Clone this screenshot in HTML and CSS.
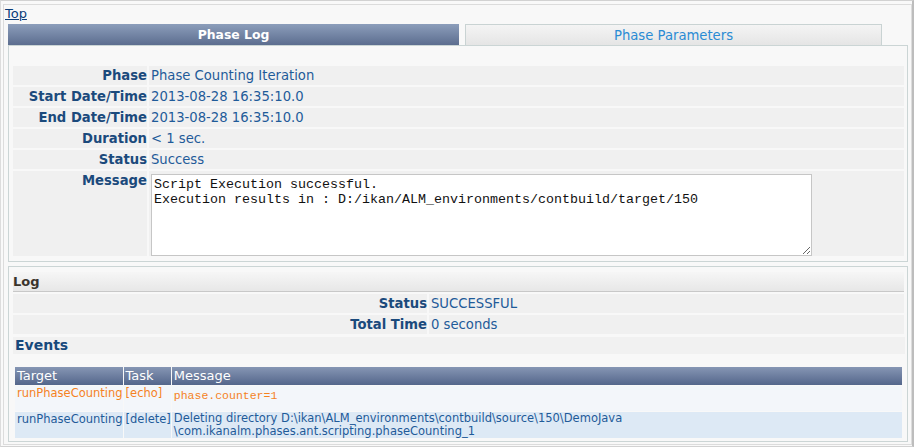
FILE: index.html
```html
<!DOCTYPE html>
<html>
<head>
<meta charset="utf-8">
<title>Phase Log</title>
<link rel="stylesheet" href="styles.css">
</head>
<body>
<div class="frame">
  <div class="box">
    <a class="top-link" href="#">Top</a>
    <div class="tabs">
      <div class="tab tab-active">Phase Log</div>
      <div class="tab tab-idle">Phase Parameters</div>
    </div>
    <div class="panel">
      <table class="kv details">
        <tr><td class="label">Phase</td><td class="value">Phase Counting Iteration</td></tr>
        <tr><td class="label">Start Date/Time</td><td class="value">2013-08-28 16:35:10.0</td></tr>
        <tr><td class="label">End Date/Time</td><td class="value">2013-08-28 16:35:10.0</td></tr>
        <tr><td class="label">Duration</td><td class="value">&lt; 1 sec.</td></tr>
        <tr><td class="label">Status</td><td class="value">Success</td></tr>
        <tr class="msg-row"><td class="label">Message</td><td class="value msg-cell"><textarea class="msg" readonly>Script Execution successful.
Execution results in : D:/ikan/ALM_environments/contbuild/target/150</textarea></td></tr>
      </table>
    </div>
    <div class="panel log-panel">
      <table class="kv log-kv">
        <tr><th class="log-head" colspan="2">Log</th></tr>
        <tr><td class="label log-label">Status</td><td class="value">SUCCESSFUL</td></tr>
        <tr><td class="label log-label">Total Time</td><td class="value">0 seconds</td></tr>
      </table>
      <div class="events-title">Events</div>
      <table class="events">
        <tr class="ev-head"><th>Target</th><th>Task</th><th class="ev-msg">Message</th></tr>
        <tr class="ev-row ev-warn"><td class="nw">runPhaseCounting</td><td class="nw">[echo]</td><td class="ev-msg"><span class="mono">phase.counter=1</span></td></tr>
        <tr class="ev-row ev-info"><td class="nw">runPhaseCounting</td><td class="nw">[delete]</td><td class="ev-msg tight">Deleting directory D:\ikan\ALM_environments\contbuild\source\150\DemoJava<br>\com.ikanalm.phases.ant.scripting.phaseCounting_1</td></tr>
      </table>
    </div>
  </div>
</div>
</body>
</html>
```
FILE: styles.css
```css
html, body {
  margin: 0;
  padding: 0;
  background: #f9f9f9;
}
body {
  font-family: "DejaVu Sans", Verdana, sans-serif;
  font-size: 13px;
}
.frame {
  box-sizing: border-box;
  width: 914px;
  height: 447px;
  border-top: 1px solid #d2d2d2;
  border-left: 1px solid #dcdcdc;
  border-right: 2px solid #bdbdbd;
  border-bottom: 1px solid #d2d2d2;
  padding: 3px 0 0 2px;
}
.box {
  box-sizing: border-box;
  height: 441px;
  border: 1px solid #dcdcdc;
  background: #f8f8f8;
  padding: 0 3px 0 4px;
}
.top-link {
  display: block;
  width: max-content;
  margin-left: -3px;
  color: #0b3d78;
  text-decoration: underline;
  font-size: 13px;
  line-height: 15px;
  height: 15px;
  margin-top: 1px;
  margin-bottom: 3px;
}
.tabs {
  display: flex;
  gap: 6px;
  height: 21px;
}
.tab {
  box-sizing: border-box;
  height: 21px;
  line-height: 21px;
  text-align: center;
}
.tab-active {
  width: 451px;
  background: linear-gradient(#8c9ebb, #5c6d8f);
  color: #ffffff;
  font-weight: bold;
  font-size: 12.4px;
}
.tab-idle {
  width: 417px;
  border: 1px solid #c9d3d3;
  border-bottom: none;
  background: linear-gradient(#f4f4f4, #e5e5e5);
  color: #2a8bd4;
  font-size: 13.2px;
  line-height: 21px;
}
.panel {
  box-sizing: border-box;
  width: 900px;
  height: 217px;
  border: 1px solid #cbd5d5;
  background: #f8f8f8;
}
.kv {
  border-collapse: separate;
  border-spacing: 2px;
  width: calc(100% - 3px);
  margin: 18px 1px 0 2px;
  font-size: 13.2px;
}
.kv td {
  background: #f0f0f0;
  height: 19px;
  padding: 0;
  line-height: 15px;
}
.label {
  width: 134px;
  text-align: right;
  font-weight: bold;
  color: #1b4a7c;
  white-space: nowrap;
}
.value {
  color: #1f5b99;
  padding-left: 2px !important;
}
.msg-row td {
  vertical-align: top;
}
.msg-row .label {
  padding-top: 2px !important;
}
.msg-cell {
  padding-top: 3px !important;
  padding-bottom: 0 !important;
  height: auto;
}
.msg {
  display: block;
  box-sizing: border-box;
  width: 661px;
  height: 82px;
  margin: 0;
  padding: 2px 2px;
  border: 1px solid #c6c6c6;
  background: #ffffff;
  font-family: "Liberation Mono", "Courier New", monospace;
  font-size: 13.33px;
  line-height: 15px;
  color: #111111;
  resize: both;
  outline: none;
}
.log-panel {
  margin-top: 4px;
  height: 176px;
}
.log-kv {
  margin-top: 3px;
}
.log-head {
  text-align: left;
  height: 19px;
  padding: 0;
  background: linear-gradient(#f6f6f6, #e7e7e7);
  border-bottom: 1px solid #c8c8c8;
  color: #3a342c;
  font-weight: bold;
  font-size: 13px;
  line-height: 19px;
}
.log-label {
  width: 414px;
}
.events-title {
  margin: 1px 2px 0 4px;
  height: 17px;
  line-height: 16px;
  padding-left: 2px;
  background: #f1f1f1;
  font-weight: bold;
  font-size: 14px;
  color: #17497c;
}
.events {
  border-collapse: separate;
  border-spacing: 1px;
  margin: 12px 4px 0 5px;
  width: calc(100% - 9px);
  font-size: 11.5px;
}
.events th, .events td {
  padding: 0 0 0 2px;
  text-align: left;
  vertical-align: top;
}
.ev-head th {
  height: 18px;
  line-height: 18px;
  background: linear-gradient(#8696b4, #54668b);
  color: #ffffff;
  font-weight: normal;
  font-size: 13px;
}
.nw {
  white-space: nowrap;
}
.ev-msg {
  width: 100%;
}
.ev-row td {
  line-height: 13px;
}
.ev-warn td {
  background: #f3f6fa;
  color: #f5821f;
  height: 25px;
  padding-top: 1px;
  box-sizing: border-box;
}
.mono {
  font-family: "Liberation Mono", "Courier New", monospace;
  font-size: 11.5px;
  display: inline-block;
  padding-top: 2px;
}
.ev-info td {
  background: #dde9f5;
  color: #1f5b99;
  height: 26px;
  padding-top: 0;
  box-sizing: border-box;
}
.ev-info td.nw {
  padding-top: 1px;
}
.tight {
  line-height: 13px !important;
}
```
